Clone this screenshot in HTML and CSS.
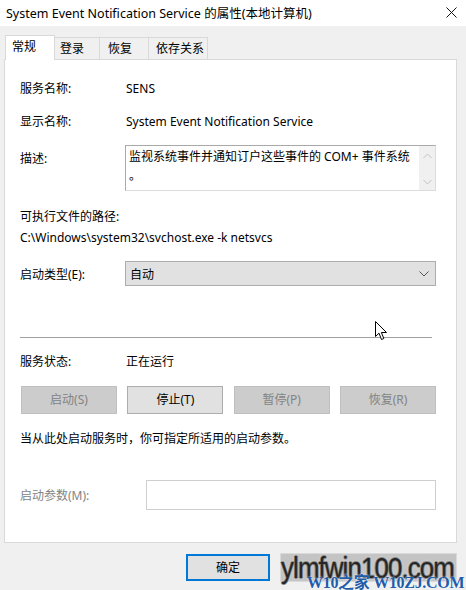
FILE: index.html
```html
<!DOCTYPE html>
<html lang="zh-CN">
<head>
    <meta charset="UTF-8">
    <title>System Event Notification Service 的属性(本地计算机)</title>
    <link rel="stylesheet" href="styles.css">
</head>
<body>
<div class="window">
    <div class="titlebar">
        <span class="title">System Event Notification Service 的属性(本地计算机)</span>
        <span class="close">
            <svg width="11" height="11" viewBox="0 0 11 11"><path d="M0.5 0.5 L10.5 10.5 M10.5 0.5 L0.5 10.5" stroke="#111" stroke-width="1" fill="none"/></svg>
        </span>
    </div>

    <div class="tabs">
        <div class="tab active">常规</div>
        <div class="tab">登录</div>
        <div class="tab">恢复</div>
        <div class="tab">依存关系</div>
    </div>

    <div class="panel">
        <div class="row r-name">
            <span class="label">服务名称:</span>
            <span class="value">SENS</span>
        </div>
        <div class="row r-display">
            <span class="label">显示名称:</span>
            <span class="value">System Event Notification Service</span>
        </div>
        <div class="row r-desc">
            <span class="label desc-label">描述:</span>
            <div class="textbox">
                <div class="textbox-text">监视系统事件并通知订户这些事件的 COM+ 事件系统<br>。</div>
                <div class="scrollbar">
                    <svg width="9" height="6" viewBox="0 0 9 6"><path d="M0.5 5 L4.5 1 L8.5 5" stroke="#c2c2c2" fill="none"/></svg>
                    <svg width="9" height="6" viewBox="0 0 9 6"><path d="M0.5 1 L4.5 5 L8.5 1" stroke="#c2c2c2" fill="none"/></svg>
                </div>
            </div>
        </div>
        <div class="line path-label">可执行文件的路径:</div>
        <div class="line path">C:\Windows\system32\svchost.exe -k netsvcs</div>
        <div class="row r-type">
            <span class="label">启动类型(E):</span>
            <div class="select">
                <span>自动</span>
                <svg width="10" height="6" viewBox="0 0 10 6"><path d="M0.5 0.5 L5 5 L9.5 0.5" stroke="#555" fill="none"/></svg>
            </div>
        </div>
        <div class="separator"></div>
        <div class="row r-status">
            <span class="label">服务状态:</span>
            <span class="value">正在运行</span>
        </div>
        <div class="buttons">
            <div class="btn disabled">启动(S)</div>
            <div class="btn">停止(T)</div>
            <div class="btn disabled">暂停(P)</div>
            <div class="btn disabled">恢复(R)</div>
        </div>
        <div class="line hint">当从此处启动服务时，你可指定所适用的启动参数。</div>
        <div class="row r-params">
            <span class="label gray">启动参数(M):</span>
            <div class="input"></div>
        </div>

        <!-- 鼠标指针 -->
        <svg class="cursor" width="13" height="20" viewBox="0 0 13 20">
            <path d="M0.5 0.5 L0.5 15.5 L4 12.2 L6.5 18.5 L8.8 17.5 L6.4 11.5 L11.5 11.5 Z" fill="#fff" stroke="#000" stroke-width="1" stroke-linejoin="miter"/>
        </svg>
    </div>

    <div class="footer">
        <div class="btn ok">确定</div>
    </div>

    <!-- 水印 -->
    <div class="watermark">
        <div class="wm-box">
            <div class="wm-big">ylmfwin100.com</div>
        </div>
        <div class="wm-small">W10之家 W10ZJ.COM</div>
    </div>
</div>
</body>
</html>
```

FILE: styles.css
```css
* {
    box-sizing: border-box;
}
body {
    margin: 0;
    padding: 0;
    background-color: #f0f0f0;
    font-family: "Noto Sans", "Noto Sans CJK SC", sans-serif;
    font-size: 12px;
    color: #000;
}
.window {
    position: relative;
    width: 466px;
    height: 590px;
    overflow: hidden;
}
.titlebar {
    height: 26px;
    background-color: #fff;
    display: flex;
    align-items: center;
    justify-content: space-between;
    padding: 0 9px 0 6px;
    font-size: 12.5px;
}
.title {
    margin-top: -2px;
}
.close {
    display: flex;
    margin-top: -2px;
}
.tabs {
    display: flex;
    align-items: flex-end;
    margin-left: 5px;
    padding-top: 9px;
    height: 33px;
}
.tab {
    height: 22px;
    line-height: 21px;
    border: 1px solid #d9d9d9;
    border-bottom: none;
    border-left: none;
    background-color: #f0f0f0;
    white-space: nowrap;
}
.tab:nth-child(2) { width: 45px; padding-left: 5px; }
.tab:nth-child(3) { width: 49px; padding-left: 8px; }
.tab:nth-child(4) { width: 59px; padding-left: 7px; }
.tab.active {
    position: relative;
    z-index: 1;
    width: 50px;
    height: 25px;
    line-height: 22px;
    padding-left: 6px;
    border-left: 1px solid #d9d9d9;
    background-color: #fff;
    margin-bottom: -1px;
}
.panel {
    position: relative;
    margin-left: 4px;
    width: 453px;
    height: 484px;
    background-color: #fff;
    border: 1px solid #d9d9d9;
    padding: 18px 20px 0 15px;
}
.row {
    display: flex;
    align-items: center;
}
.label {
    width: 105px;
    flex-shrink: 0;
}
.value {
    padding-left: 1px;
}
.r-name { height: 20px; }
.r-display { height: 20px; margin-top: 13px; }
.r-desc {
    align-items: flex-start;
    margin-top: 14px;
}
.desc-label {
    margin-top: 5px;
    line-height: 18px;
}
.textbox {
    flex: 1;
    height: 46px;
    border: 1px solid #a9a9a9;
    border-right-color: #dcdcdc;
    border-bottom-color: #dcdcdc;
    display: flex;
}
.textbox-text {
    flex: 1;
    padding: 1px 0 0 3px;
    line-height: 19px;
}
.scrollbar {
    width: 16px;
    background-color: #f0f0f0;
    display: flex;
    flex-direction: column;
    justify-content: space-between;
    align-items: center;
    padding: 7px 0 5px;
}
.line {
    height: 18px;
    line-height: 18px;
}
.path-label { margin-top: 17px; }
.path { margin-top: 3px; }
.r-type { margin-top: 14px; }
.select {
    flex: 1;
    height: 25px;
    border: 1px solid #adadad;
    background-color: #e1e1e1;
    display: flex;
    align-items: center;
    justify-content: space-between;
    padding: 0 6px 0 4px;
}
.separator {
    margin-top: 51px;
    width: 412px;
    height: 1px;
    background-color: #a0a0a0;
}
.r-status {
    height: 18px;
    margin-top: 14px;
}
.buttons {
    display: flex;
    justify-content: space-between;
    margin-top: 16px;
    padding-left: 1px;
}
.btn {
    width: 96px;
    height: 28px;
    line-height: 26px;
    text-align: center;
    border: 1px solid #adadad;
    background-color: #e1e1e1;
}
.btn.disabled {
    background-color: #cccccc;
    border-color: #bfbfbf;
    color: #838383;
}
.hint { margin-top: 16px; }
.r-params { margin-top: 32px; }
.r-params .label { width: 126px; }
.gray { color: #838383; }
.input {
    flex: 1;
    height: 30px;
    border: 1px solid #cfcfcf;
}
.cursor {
    position: absolute;
    left: 370px;
    top: 261px;
}
.footer {
    display: flex;
    padding: 11px 0 0 186px;
}
.btn.ok {
    width: 84px;
    height: 27px;
    line-height: 23px;
    border: 2px solid #0078d7;
}
.watermark {
    position: absolute;
    left: 280px;
    top: 553px;
    width: 186px;
    height: 37px;
}
.wm-box {
    width: 177px;
    height: 29px;
    background-color: #c4c4c4;
    border: 1px solid #dadada;
}
.wm-big {
    font-family: "Liberation Sans", Arial, sans-serif;
    font-size: 30px;
    line-height: 27px;
    color: #262626;
    white-space: nowrap;
    letter-spacing: -1px;
    transform: scaleX(0.86);
    transform-origin: left center;
    text-shadow: 1px 0 0 #8c8c8c, -1px 0 0 #8c8c8c, 0 1px 0 #8c8c8c, 0 -1px 0 #8c8c8c, 0 0 3px #e8e8e8;
}
.wm-small {
    position: absolute;
    left: 27px;
    top: 21px;
    font-family: "Liberation Serif", "Noto Sans CJK SC", serif;
    font-weight: bold;
    font-size: 16px;
    line-height: 18px;
    letter-spacing: -0.3px;
    color: #1f5cab;
    white-space: nowrap;
    text-shadow: 0 0 2px #fff;
}
```
